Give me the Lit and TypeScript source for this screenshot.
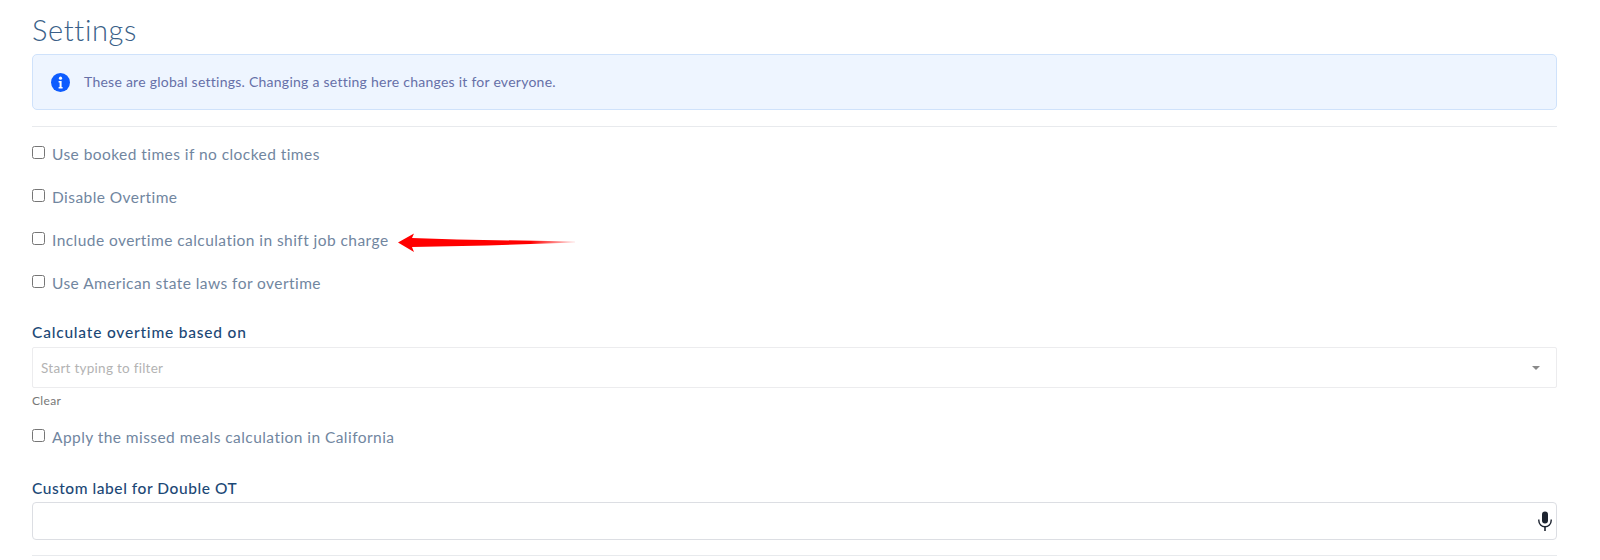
import { LitElement, html, css, svg } from "lit";
import { customElement } from "lit/decorators.js";

const arrow = svg`<svg class="arrow" width="180" height="24" viewBox="0 0 180 24"><defs><linearGradient id="g" x1="0" x2="1" y1="0" y2="0"><stop offset="0" stop-color="#ff0000"/><stop offset="0.75" stop-color="#ff0000"/><stop offset="1" stop-color="#ff0000" stop-opacity="0.1"/></linearGradient></defs><path d="M1 11.5 L17 2.5 L15 7 L60 8.5 L178 10.5 L178 11.5 L90 14.5 L15 16 L17 21 Z" fill="url(#g)"/></svg>`;

const check = (label: string, extra: unknown = null) => html`<label class="check"><input type="checkbox" /><span>${label}</span>${extra}</label>`;

@customElement("app-root")
export class AppRoot extends LitElement {
  static styles = css`
    :host { display: block; height: 560px; overflow: hidden; background: #fff; font-family: "Lato", "Open Sans", sans-serif; color: #5b7291; box-sizing: border-box; padding: 0 43px 0 32px; }
    h1 { margin: 0; padding-top: 14px; height: 26px; font-size: 29px; line-height: 32px; font-weight: 300; color: #3a5f88; letter-spacing: 0.65px; }
    .alert { margin-top: 14px; height: 56px; box-sizing: border-box; display: flex; align-items: center; gap: 14px; padding-left: 18px; background: #eef5ff; border: 1px solid #cfe2fb; border-radius: 5px; color: #6670a8; font-size: 14px; letter-spacing: 0.25px; }
    .alert span { margin-top: -1px; }
    .alert svg { flex: none; }
    hr { border: 0; border-top: 1.5px solid #e8eaed; margin: 0; }
    .top-rule { margin-top: 16px; }
    .checks { display: flex; flex-direction: column; }
    .list { padding-top: 6px; }
    .check { display: flex; align-items: center; gap: 7px; height: 42.8px; font-size: 15.5px; letter-spacing: 0.44px; color: #71869f; font-weight: 400; }
    .check input { margin: -3px 0 0 0; width: 13px; height: 13px; flex: none; }
    .arrow { margin: 6px 0 0 1px; flex: none; }
    .field-label { font-size: 15.5px; color: #1c4876; font-weight: 500; line-height: 18px; }
    .calc { margin-top: 19px; letter-spacing: 0.8px; }
    .select { margin-top: 6px; height: 41px; box-sizing: border-box; border: 1.5px solid #ececee; border-radius: 2px; display: flex; align-items: center; justify-content: space-between; padding: 0 16px 0 8px; font-size: 13.5px; letter-spacing: 0.27px; color: #b3b3b3; }
    .caret { width: 0; height: 0; border-left: 4px solid transparent; border-right: 4px solid transparent; border-top: 4px solid #8a8a8a; }
    .clear { font-size: 12px; letter-spacing: 0.35px; color: #777; margin-top: 6px; line-height: 14px; }
    .cal-check { margin-top: 8px; height: 42px; }
    .double { margin-top: 21px; letter-spacing: 0.55px; }
    .input { margin-top: 5px; height: 38px; box-sizing: border-box; border: 1.5px solid #dcdee3; border-radius: 4px; display: flex; align-items: center; justify-content: flex-end; padding-right: 3px; }
    .bottom-rule { margin-top: 15px; }
  `;

  render() {
    return html`
      <h1>Settings</h1>
      <div class="alert">
        <svg width="19" height="19" viewBox="0 0 19 19"><circle cx="9.5" cy="9.5" r="9.5" fill="#0d5cff"/><circle cx="9.5" cy="5.2" r="1.6" fill="#fff"/><path d="M7.6 8h3v6h1v1.4h-4V14h1V9.4h-1z" fill="#fff"/></svg>
        <span>These are global settings. Changing a setting here changes it for everyone.</span>
      </div>
      <hr class="top-rule" />
      <div class="checks list">
        ${check("Use booked times if no clocked times")}
        ${check("Disable Overtime")}
        ${check("Include overtime calculation in shift job charge", arrow)}
        ${check("Use American state laws for overtime")}
      </div>
      <div class="field-label calc">Calculate overtime based on</div>
      <div class="select"><span>Start typing to filter</span><span class="caret"></span></div>
      <div class="clear">Clear</div>
      <div class="checks cal-check">${check("Apply the missed meals calculation in California")}</div>
      <div class="field-label double">Custom label for Double OT</div>
      <div class="input">
        <svg width="16" height="20" viewBox="0 0 16 20"><rect x="5" y="0.5" width="6" height="12" rx="3" fill="#1d2430"/><path d="M1.8 8.5v1a6.2 6.2 0 0 0 12.4 0v-1" fill="none" stroke="#1d2430" stroke-width="1.4"/><path d="M8 15.5V20" stroke="#1d2430" stroke-width="1.6"/></svg>
      </div>
      <hr class="bottom-rule" />
    `;
  }
}
